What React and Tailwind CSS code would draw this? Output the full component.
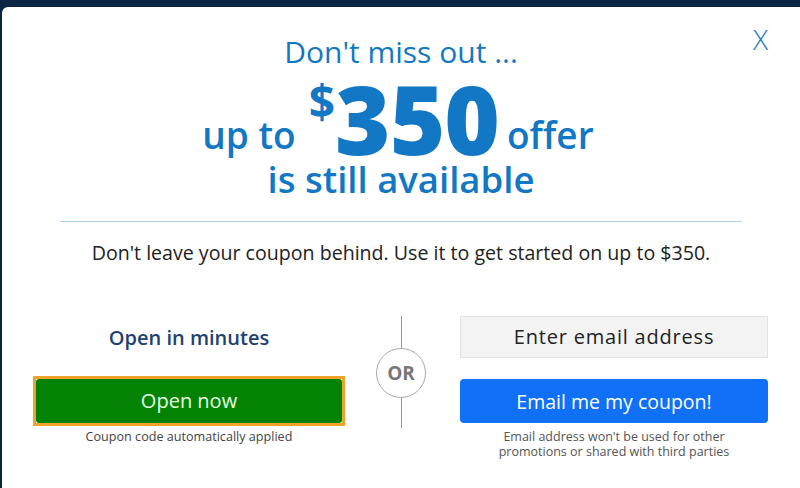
export default function App() {
  const font = { fontFamily: '"Open Sans", "Noto Sans", sans-serif' };
  return (
    <div className="h-[488px] w-[800px] overflow-hidden bg-[#0b2545] pt-[7px] pl-[2px]" style={font}>
      <div className="relative h-full w-full rounded-tl-[6px] bg-white">
        <button className="absolute right-[32px] top-[18px] text-[28px] font-light leading-none text-[#1a79c2]">X</button>
        <div className="flex flex-col items-center pt-[26px] text-[#1277c4]">
          <div className="text-[30px] leading-[38px]">Don't miss out ...</div>
          <div className="-ml-[6px] flex items-end leading-none">
            <span className="mb-[12px] text-[37px] font-semibold">up to</span>
            <span className="ml-[13px] flex items-start">
              <span className="mt-[7px] text-[46px] font-bold leading-none">$</span>
              <span className="text-[95px] font-extrabold leading-[94px] tracking-[-1px]">350</span>
            </span>
            <span className="mb-[12px] ml-[8px] text-[37px] font-semibold">offer</span>
          </div>
          <div className="-mt-[10px] text-[36.5px] font-semibold leading-[48px]">is still available</div>
        </div>
        <div className="mx-[58px] mt-[18px] h-px bg-[#a9cfe3]"></div>
        <p className="mt-[16px] text-center text-[19.6px] text-[#222]">Don't leave your coupon behind. Use it to get started on up to $350.</p>
        <div className="mt-[49px] flex pl-[31px]">
          <div className="flex w-[312px] flex-col items-center pt-[8px]">
            <div className="text-[20px] font-semibold leading-[28px] text-[#1d4271]">Open in minutes</div>
            <div className="mt-[24px] h-[50px] w-[312px] border-[3px] border-[#f0a32a]">
              <div className="flex h-full items-center justify-center rounded-[3px] bg-[#038203] text-[20px] text-[#e8ffe0]">Open now</div>
            </div>
            <div className="mt-[2px] text-[12.6px] text-[#444]">Coupon code automatically applied</div>
          </div>
          <div className="flex w-[112px] flex-col items-center">
            <div className="h-[32px] w-px bg-[#999]"></div>
            <div className="flex h-[50px] w-[50px] items-center justify-center rounded-full border border-[#aaa] text-[19px] font-bold text-[#777]">OR</div>
            <div className="h-[30px] w-px bg-[#999]"></div>
          </div>
          <div className="ml-[3px] flex w-[308px] flex-col items-center">
            <div className="flex h-[42px] w-full items-center justify-center border border-[#e2e2e2] bg-[#f3f3f3] text-[20px] tracking-[0.8px] text-[#222]">Enter email address</div>
            <div className="mt-[21px] flex h-[44px] w-full items-center justify-center rounded-[4px] bg-[#1170f8] text-[19.5px] text-white">Email me my coupon!</div>
            <div className="mt-[6px] text-center text-[12.5px] leading-[15px] text-[#555]">Email address won't be used for other<br />promotions or shared with third parties</div>
          </div>
        </div>
      </div>
    </div>
  );
}
